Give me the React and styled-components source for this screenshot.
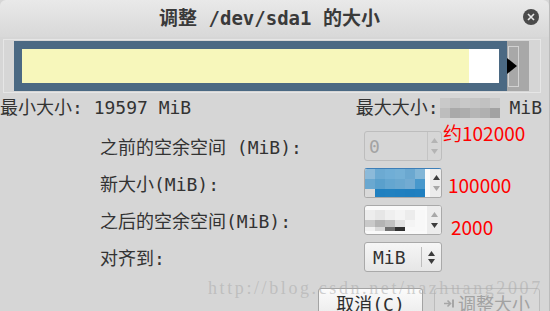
import React from 'react';
import styled, { createGlobalStyle } from 'styled-components';

const GlobalStyle = createGlobalStyle`
  html, body {
    margin: 0;
    padding: 0;
    background: #d6d6d6;
  }
  body {
    width: 550px;
    height: 311px;
    overflow: hidden;
    font-family: "DejaVu Sans Mono", "Noto Sans CJK SC", monospace;
    color: #333;
  }
`;

const Window = styled.div`
  position: relative;
  width: 550px;
  height: 311px;
  box-sizing: border-box;
  display: flex;
  flex-direction: column;
  background: #d6d6d6;
  border-right: 1px solid #bcbcbc;
  overflow: hidden;
`;

const TitleBar = styled.div`
  height: 37px;
  flex-shrink: 0;
  box-sizing: border-box;
  display: grid;
  grid-template-columns: 1fr auto 1fr;
  align-items: center;
  padding: 0 10px 4px 0;
  background: linear-gradient(#e9e9e9, #d8d8d8);
  border-radius: 6px 6px 0 0;
`;

const Title = styled.h1`
  grid-column: 2;
  margin: 0;
  font-size: 19px;
  font-weight: 700;
  color: #3a3a3a;
  white-space: pre;
`;

const CloseButton = styled.button`
  grid-column: 3;
  justify-self: end;
  width: 16px;
  height: 16px;
  padding: 0;
  border: none;
  border-radius: 50%;
  background: #4a4a4a;
  display: flex;
  align-items: center;
  justify-content: center;
`;

const Frame = styled.div`
  margin: 2px 8px 0 3px;
  border: 1px solid #e6e6e6;
  padding: 1px 11px 1px 10px;
  display: flex;
`;

const Partition = styled.div`
  width: 494px;
  height: 50px;
  box-sizing: border-box;
  padding: 8px;
  background: #4b6983;
  display: flex;
`;

const Used = styled.div`
  flex: 1;
  background: #f7f7bb;
`;

const Unused = styled.div`
  width: 30px;
  background: #ffffff;
`;

const Handle = styled.div`
  width: 22px;
  height: 50px;
  background: #a8a8a8;
  display: flex;
`;

const InfoRow = styled.div`
  margin-top: 3px;
  height: 24px;
  padding-right: 7px;
  display: flex;
  align-items: center;
  justify-content: space-between;
  font-size: 18px;
  line-height: 24px;
  color: #333;
`;

const InfoText = styled.span`
  display: flex;
  align-items: center;
  white-space: pre;
`;

const Mosaic = styled.div`
  display: grid;
  grid-template-columns: ${p => p.$cols};
  grid-template-rows: ${p => p.$rows};
  margin: ${p => p.$margin || '0'};
`;

const Pixel = styled.div`
  background: ${p => p.$c};
`;

const Form = styled.div`
  margin-top: 11px;
  padding-left: 100px;
  display: grid;
  grid-template-columns: 264px 78px auto;
  grid-auto-rows: 30px;
  row-gap: 7px;
  align-items: center;
`;

const Label = styled.span`
  font-size: 18px;
  color: #333;
  white-space: pre;
`;

const Note = styled.span`
  font-family: "Noto Sans CJK SC", "Liberation Sans", sans-serif;
  font-size: 19px;
  line-height: 20px;
  color: #ff0000;
  margin-left: ${p => p.$left}px;
  transform: translateY(${p => p.$shift}px);
`;

const Spin = styled.div`
  height: 30px;
  box-sizing: border-box;
  display: flex;
  border: 1px solid ${p => (p.$disabled ? '#bdbdbd' : '#a9a9a9')};
  border-top-color: ${p => (p.$focus ? '#3d7fb8' : p.$disabled ? '#bdbdbd' : '#a9a9a9')};
  border-radius: 3px;
  background: ${p => (p.$disabled ? '#d6d6d6' : '#fafafa')};
  overflow: hidden;
`;

const Field = styled.div`
  flex: 1;
  display: flex;
  align-items: center;
  padding-left: ${p => p.$pad || 0}px;
  font-size: 18px;
  color: ${p => (p.$disabled ? '#a3a3a3' : '#333')};
`;

const Arrows = styled.div`
  width: 13px;
  display: flex;
  flex-direction: column;
  align-items: center;
  justify-content: center;
  gap: 6px;
  border-left: 1px solid ${p => (p.$line ? '#c4c4c4' : 'transparent')};
  background: ${p => (p.$disabled ? 'transparent' : '#ececec')};
`;

const Combo = styled.div`
  height: 30px;
  box-sizing: border-box;
  display: flex;
  align-items: center;
  border: 1px solid #a9a9a9;
  border-radius: 3px;
  background: linear-gradient(#f6f6f6, #e6e6e6);
  font-size: 18px;
  color: #333;
`;

const ComboText = styled.span`
  flex: 1;
  padding-left: 8px;
`;

const ComboSep = styled.span`
  width: 1px;
  height: 20px;
  background: #bdbdbd;
`;

const ComboArrows = styled.div`
  width: 19px;
  display: flex;
  flex-direction: column;
  align-items: center;
  gap: 3px;
`;

const Buttons = styled.div`
  margin-top: 16px;
  padding-right: 9px;
  display: flex;
  justify-content: flex-end;
  gap: 11px;
`;

const Button = styled.button`
  width: ${p => p.$w}px;
  height: 30px;
  box-sizing: border-box;
  display: flex;
  align-items: center;
  justify-content: center;
  gap: 3px;
  padding: 0;
  border: 1px solid ${p => (p.disabled ? '#bcbcbc' : '#a3a3a3')};
  border-radius: 3px;
  background: ${p => (p.disabled ? '#d8d8d8' : 'linear-gradient(#fbfbfb, #ebebeb)')};
  font-family: "DejaVu Sans Mono", "Noto Sans CJK SC", monospace;
  font-size: 18px;
  color: ${p => (p.disabled ? '#a2a2a2' : '#2e2e2e')};
`;

const Watermark = styled.div`
  position: absolute;
  left: 208px;
  top: 278px;
  font-family: "Liberation Serif", serif;
  font-size: 18px;
  letter-spacing: 2.6px;
  color: rgba(170, 170, 170, 0.55);
  white-space: nowrap;
  pointer-events: none;
`;

const Tri = ({ up, color }) => (
  <svg width="7" height="5" viewBox="0 0 7 5">
    <polygon points={up ? '0,5 3.5,0 7,5' : '0,0 7,0 3.5,5'} fill={color} />
  </svg>
);

const SpinBox = ({ disabled, focus, upColor, downColor, line, children, pad }) => (
  <Spin $disabled={disabled} $focus={focus}>
    <Field $disabled={disabled} $pad={pad}>{children}</Field>
    <Arrows $disabled={disabled} $line={line}>
      <Tri up color={upColor} />
      <Tri color={downColor} />
    </Arrows>
  </Spin>
);

const maxBlur = [
  '#c9c9c9', '#c2c2c2', '#c8c8c8', '#c5c5c5', '#c1c1c1', '#c9c9c9',
  '#bdbdbd', '#a9a9a9', '#adadad', '#b5b5b5', '#b0b0b0', '#a2a2a2',
];

const newBlur = [
  '#8cbad9', '#6caad2', '#70aed6', '#74b0d6', '#6ba8d0', '#82b6d7',
  '#6aa8d0', '#5aa0cc', '#64a6d0', '#6aa8d0', '#72abd2', '#4898cc',
  '#d9d9d9', '#2080c0', '#2181c0', '#2080c0', '#1f7fbf', '#2080c0',
];

const afterBlur = [
  '#ededed', '#e6e6e6', '#efefef', '#f4f4f4', '#ececec', '#f8f8f8',
  '#c9c9c9', '#b4b4b4', '#c1c1c1', '#e1e1e1', '#f4f4f4', '#f8f8f8',
  '#f1f1f1', '#d8d8d8', '#707070', '#303030', '#f8f8f8', '#f8f8f8',
];

export default function App() {
  return (
    <Window>
      <GlobalStyle />
      <TitleBar>
        <Title>调整 /dev/sda1 的大小</Title>
        <CloseButton aria-label="close">
          <svg width="8" height="8" viewBox="0 0 8 8">
            <path d="M1 1L7 7M7 1L1 7" stroke="#e8e8e8" strokeWidth="1.6" />
          </svg>
        </CloseButton>
      </TitleBar>

      <Frame>
        <Partition>
          <Used />
          <Unused />
        </Partition>
        <Handle>
          <svg width="22" height="50" viewBox="0 0 22 50">
            <rect x="1.5" y="5.5" width="10" height="40" fill="none" stroke="#d2d2d2" />
            <polygon points="0,17 10,25 0,33" fill="#000" />
          </svg>
        </Handle>
      </Frame>

      <InfoRow>
        <InfoText>最小大小: 19597 MiB</InfoText>
        <InfoText>
          最大大小:
          <Mosaic $cols="repeat(6, 10px)" $rows="10px 10px" $margin="0 9px 0 2px">
            {maxBlur.map((c, i) => <Pixel key={i} $c={c} />)}
          </Mosaic>
          MiB
        </InfoText>
      </InfoRow>

      <Form>
        <Label>之前的空余空间 (MiB):</Label>
        <SpinBox disabled line upColor="#b4b4b4" downColor="#b4b4b4" pad={4}>0</SpinBox>
        <Note $left={1} $shift={-13}>约102000</Note>

        <Label>新大小(MiB):</Label>
        <SpinBox focus upColor="#3c3c3c" downColor="#a8a8a8">
          <Mosaic $cols="repeat(6, 10px) 5px" $rows="10px 10px 9px">
            {newBlur.map((c, i) => (
              <React.Fragment key={i}>
                <Pixel $c={c} />
                {i % 6 === 5 && <Pixel $c="#fafafa" />}
              </React.Fragment>
            ))}
          </Mosaic>
        </SpinBox>
        <Note $left={6} $shift={2}>100000</Note>

        <Label>之后的空余空间(MiB):</Label>
        <SpinBox upColor="#a8a8a8" downColor="#3c3c3c">
          <Mosaic $cols="repeat(6, 10px)" $rows="10px 7px 4px">
            {afterBlur.map((c, i) => <Pixel key={i} $c={c} />)}
          </Mosaic>
        </SpinBox>
        <Note $left={9} $shift={7}>2000</Note>

        <Label>对齐到:</Label>
        <Combo>
          <ComboText>MiB</ComboText>
          <ComboSep />
          <ComboArrows>
            <Tri up color="#3c3c3c" />
            <Tri color="#3c3c3c" />
          </ComboArrows>
        </Combo>
      </Form>

      <Buttons>
        <Button $w={105}>取消(C)</Button>
        <Button $w={106} disabled>
          <svg width="11" height="9" viewBox="0 0 11 9">
            <path d="M0 4.5H6M3.5 1.5L6.5 4.5L3.5 7.5" stroke="#a6a6a6" strokeWidth="1.6" fill="none" />
            <rect x="8" y="0.5" width="2" height="8" fill="#a6a6a6" />
          </svg>
          调整大小
        </Button>
      </Buttons>

      <Watermark>http://blog.csdn.net/nazhuang2007</Watermark>
    </Window>
  );
}
